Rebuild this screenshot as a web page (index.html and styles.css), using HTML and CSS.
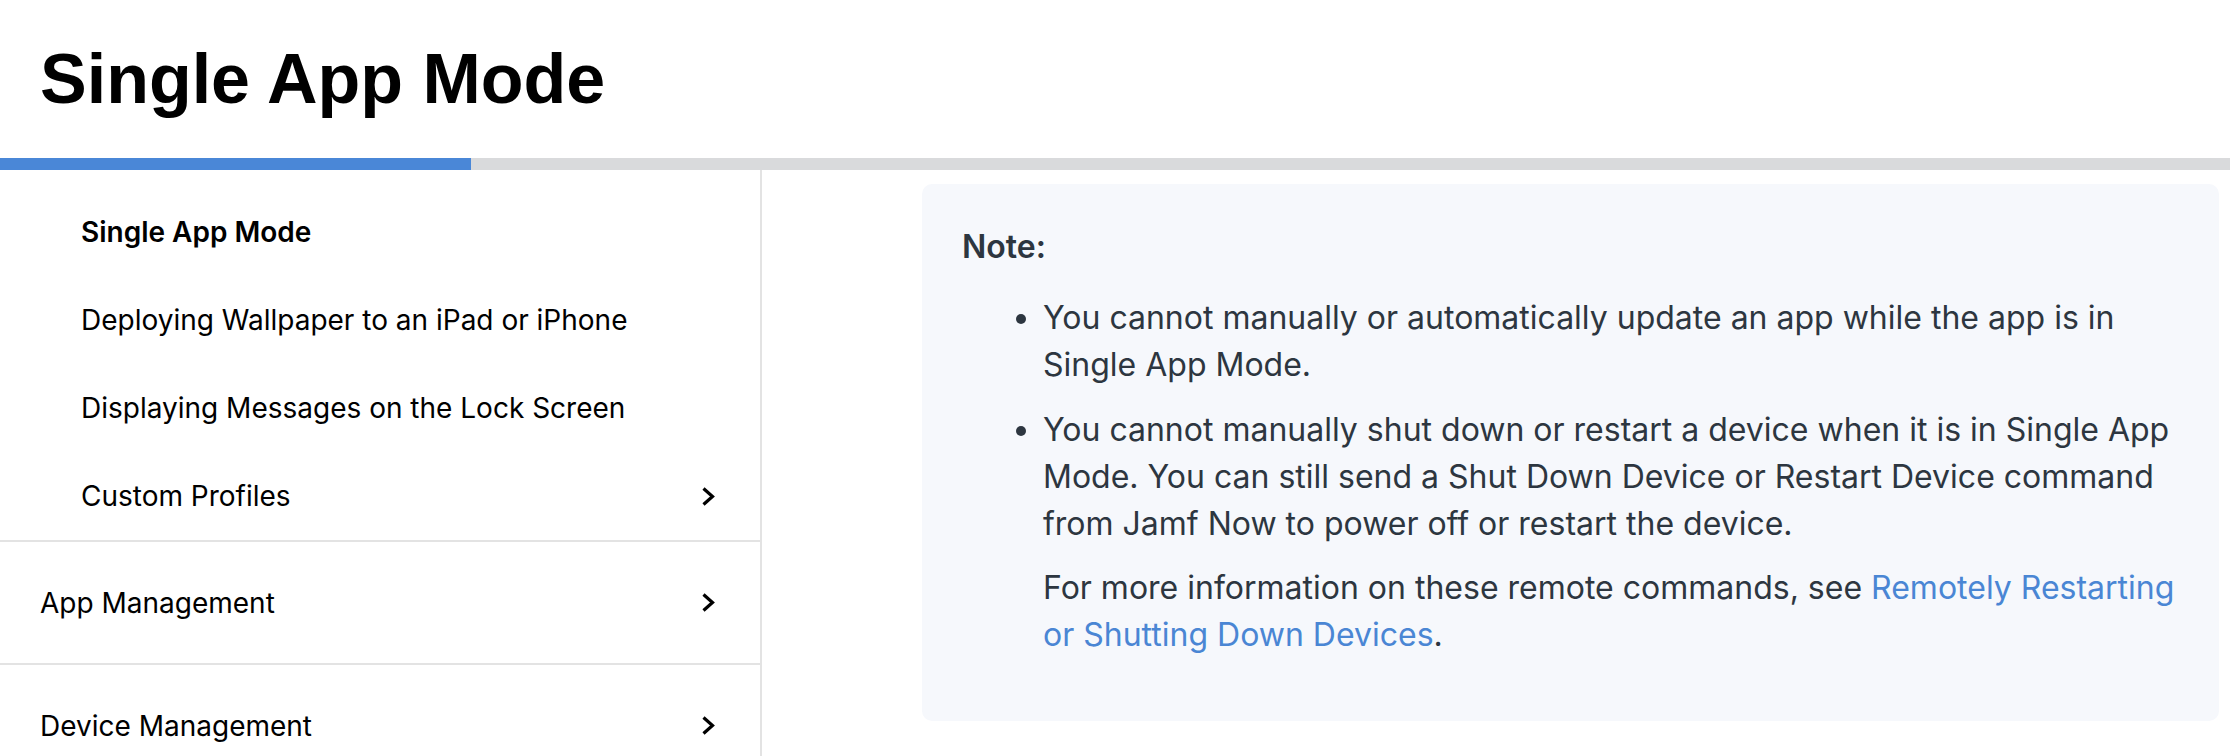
FILE: index.html
```html
<!DOCTYPE html>
<html lang="en">
<head>
  <meta charset="UTF-8">
  <title>Single App Mode</title>
  <meta name="viewport" content="width=device-width, initial-scale=1.0">
  <link rel="stylesheet" href="styles.css">
</head>
<body>
  <header class="page-header">
    <h1>Single App Mode</h1>
  </header>
  <div class="progress"><div class="progress-fill"></div></div>

  <div class="layout">
    <nav class="sidebar">
      <ul class="sub-nav">
        <li class="active">Single App Mode</li>
        <li>Deploying Wallpaper to an iPad or iPhone</li>
        <li>Displaying Messages on the Lock Screen</li>
        <li class="has-children">Custom Profiles
          <svg class="chevron" viewBox="0 0 14 21"><path d="M2.5 2.5 L11.5 10.5 L2.5 18.5" /></svg>
        </li>
      </ul>
      <div class="nav-row">App Management
        <svg class="chevron" viewBox="0 0 14 21"><path d="M2.5 2.5 L11.5 10.5 L2.5 18.5" /></svg>
      </div>
      <div class="nav-row">Device Management
        <svg class="chevron" viewBox="0 0 14 21"><path d="M2.5 2.5 L11.5 10.5 L2.5 18.5" /></svg>
      </div>
    </nav>

    <main class="content">
      <div class="note">
        <p class="note-title">Note:</p>
        <ul class="note-list">
          <li>You cannot manually or automatically update an app while the app is in Single App Mode.</li>
          <li>You cannot manually shut down or restart a device when it is in Single App Mode. You can still send a Shut Down Device or Restart Device command from Jamf Now to power off or restart the device.
            <p>For more information on these remote commands, see <a href="#">Remotely Restarting or Shutting Down Devices</a>.</p>
          </li>
        </ul>
      </div>
    </main>
  </div>
</body>
</html>
```

FILE: styles.css
```css
html, body { margin: 0; padding: 0; background: #fff; }
body { font-family: Inter, "Noto Sans", sans-serif; color: #000; overflow: hidden; }

.page-header { padding: 39px 40px 39px 40px; }
.page-header h1 { margin: 0; font-family: "Liberation Sans", Arial, sans-serif; font-weight: 700; font-size: 70px; line-height: 80px; }

.progress { height: 12px; background: #d9dadc; }
.progress-fill { width: 471px; height: 100%; background: #4a87d7; }

.layout { display: flex; }

.sidebar { width: 760px; border-right: 2px solid #e3e3e3; flex-shrink: 0; min-height: 600px; font-size: 28px; }
.sub-nav { list-style: none; margin: 0; padding: 18px 0 0 0; }
.sub-nav li { height: 88px; display: flex; align-items: center; justify-content: space-between; padding: 0 45px 0 81px; }
.sub-nav li.active { font-weight: 600; }
.nav-row { height: 121px; border-top: 2px solid #e3e3e3; display: flex; align-items: center; justify-content: space-between; padding: 0 45px 0 40px; }
.chevron { width: 14px; height: 21px; fill: none; stroke: #000; stroke-width: 3.2; }

.content { flex: 1; padding: 14px 11px 0 160px; }
.note { background: #f6f8fc; border-radius: 10px; padding: 39px 40px 63px 40px; color: #2d3640; font-size: 32px; line-height: 47px; }
.note-title { margin: 0; font-weight: 600; }
.note-list { margin: 24px 0 0 0; padding-left: 81px; }
.note-list li { margin-bottom: 18px; }
.note-list li:last-child { margin-bottom: 0; }
.note-list li p { margin: 17px 0 0 0; }
.note a { color: #4a86d4; text-decoration: none; }
```
